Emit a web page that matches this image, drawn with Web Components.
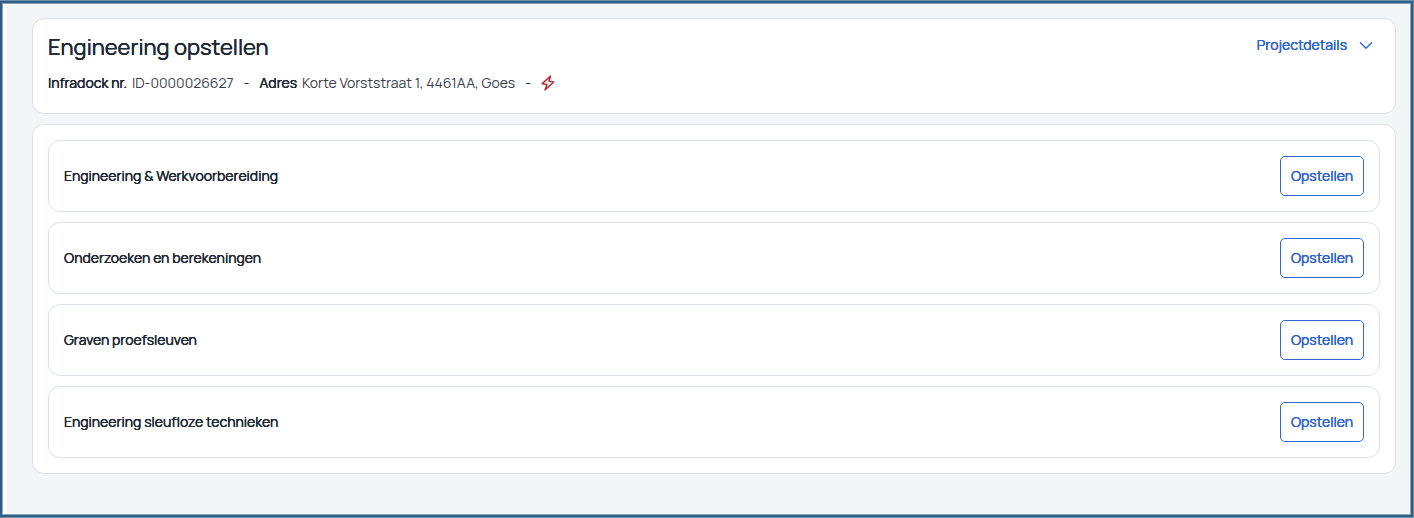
<!DOCTYPE html>
<html lang="nl">
<head>
<meta charset="utf-8">
<meta name="viewport" content="width=device-width, initial-scale=1">
<title>Engineering opstellen</title>
<style>
  html, body { margin: 0; height: 100%; }
  body {
    font-family: Manrope, Inter, "Liberation Sans", sans-serif;
    font-size: 14px;
    line-height: 20px;
    color: #212934;
    --accent: #2f66d0;
    --line: #dde2e4;
    --canvas: #f3f6f7;
    --strong: 0 0 currentColor;
  }
</style>
</head>
<body>
<app-frame>
  <project-header>
    <span slot="title">Engineering opstellen</span>
    <labelled-value label="Infradock nr.">ID-0000026627</labelled-value>
    <labelled-value label="Adres">Korte Vorststraat 1, 4461AA, Goes</labelled-value>
    <discipline-icon></discipline-icon>
  </project-header>
  <task-list>
    <task-row>Engineering &amp; Werkvoorbereiding</task-row>
    <task-row>Onderzoeken en berekeningen</task-row>
    <task-row>Graven proefsleuven</task-row>
    <task-row>Engineering sleufloze technieken</task-row>
  </task-list>
</app-frame>

<script>
  const define = (name, html, setup) => {
    const template = document.createElement('template');
    template.innerHTML = html;
    customElements.define(name, class extends HTMLElement {
      constructor() {
        super();
        this.attachShadow({ mode: 'open' }).append(template.content.cloneNode(true));
      }
      connectedCallback() { if (setup) setup(this, this.shadowRoot); }
    });
  };

  define('app-frame', `
    <style>
      :host {
        display: flex; box-sizing: border-box; min-height: 100%;
        border: 1px solid #6a8fab; border-left: 0;
        background: #fff; padding: 3px 3px 3px 7px;
        box-shadow: inset 0 0 0 2px #2f5f82, inset 0 0 0 3px #86a5ba;
      }
      main {
        flex: 1; min-width: 0; background: var(--canvas);
        display: flex; flex-direction: column; gap: 10px;
        padding: 14px 14px 39px 25px;
      }
    </style>
    <main><slot></slot></main>`);

  define('project-header', `
    <style>
      :host {
        display: block; box-sizing: border-box; min-height: 96px;
        padding: 12px 15px; background: #fff;
        border: 1px solid var(--line); border-radius: 12px;
      }
      .top { display: flex; justify-content: space-between; align-items: flex-start; }
      h1 { margin: 0; font-size: 22px; line-height: 32px; font-weight: 400; text-shadow: var(--strong), var(--strong); }
      button {
        display: flex; align-items: center; gap: 12px;
        margin: 0; padding: 4px 7px; border: 0; background: none; cursor: pointer;
        font: inherit; color: var(--accent); text-shadow: var(--strong), var(--strong);
      }
      .meta { display: flex; flex-wrap: wrap; align-items: center; gap: 10px; margin-top: 10px; }
      svg { display: block; }
    </style>
    <div class="top">
      <h1><slot name="title"></slot></h1>
      <button type="button" aria-expanded="false">Projectdetails
        <svg width="14" height="14" viewBox="0 0 14 14" fill="none" stroke="currentColor" stroke-width="1.4" stroke-linecap="round" stroke-linejoin="round" aria-hidden="true"><path d="M1.500 4.800 7 10.300l5.500-5.500"/></svg>
      </button>
    </div>
    <div class="meta"></div>`,
    (host, root) => {
      const meta = root.querySelector('.meta');
      if (meta.children.length) return;
      [...host.children].filter(el => !el.slot).forEach((el, i) => {
        if (i) {
          const dash = document.createElement('span');
          dash.textContent = '-';
          meta.append(dash);
        }
        el.slot = 'meta-' + i;
        const slot = document.createElement('slot');
        slot.name = el.slot;
        meta.append(slot);
      });
    });

  define('labelled-value', `
    <style>
      :host { display: flex; gap: 5px; }
      b { font-weight: 400; text-shadow: var(--strong), var(--strong); }
      span { color: #39404a; }
    </style>
    <b></b><span><slot></slot></span>`,
    (host, root) => { root.querySelector('b').textContent = host.getAttribute('label'); });

  define('discipline-icon', `
    <style>:host { display: block; color: #b3383c; } svg { display: block; }</style>
    <svg width="14" height="16" viewBox="0 0 14 16" fill="none" stroke="currentColor" stroke-width="1.6" stroke-linejoin="round" role="img" aria-label="Elektriciteit"><path d="M9.500 1.200 1.200 8.700 6 9.500 4 14.800 12.800 7 8 6.300Z"/></svg>`);

  define('task-list', `
    <style>
      :host {
        display: flex; flex-direction: column; gap: 10px;
        padding: 15px; background: #fff;
        border: 1px solid var(--line); border-radius: 12px;
      }
    </style>
    <slot></slot>`);

  define('task-row', `
    <style>
      :host {
        display: flex; align-items: center; justify-content: space-between; gap: 16px;
        padding: 15px; border: 1px solid var(--line); border-radius: 12px;
        text-shadow: var(--strong), var(--strong);
      }
      button {
        box-sizing: border-box; min-width: 84px; height: 40px; margin: 0; padding: 0 9px;
        border: 1px solid var(--accent); border-radius: 5px; background: #fff;
        font: inherit; color: var(--accent); text-shadow: inherit; cursor: pointer;
      }
    </style>
    <span id="name"><slot></slot></span>
    <button type="button" aria-describedby="name">Opstellen</button>`);
</script>
</body>
</html>
